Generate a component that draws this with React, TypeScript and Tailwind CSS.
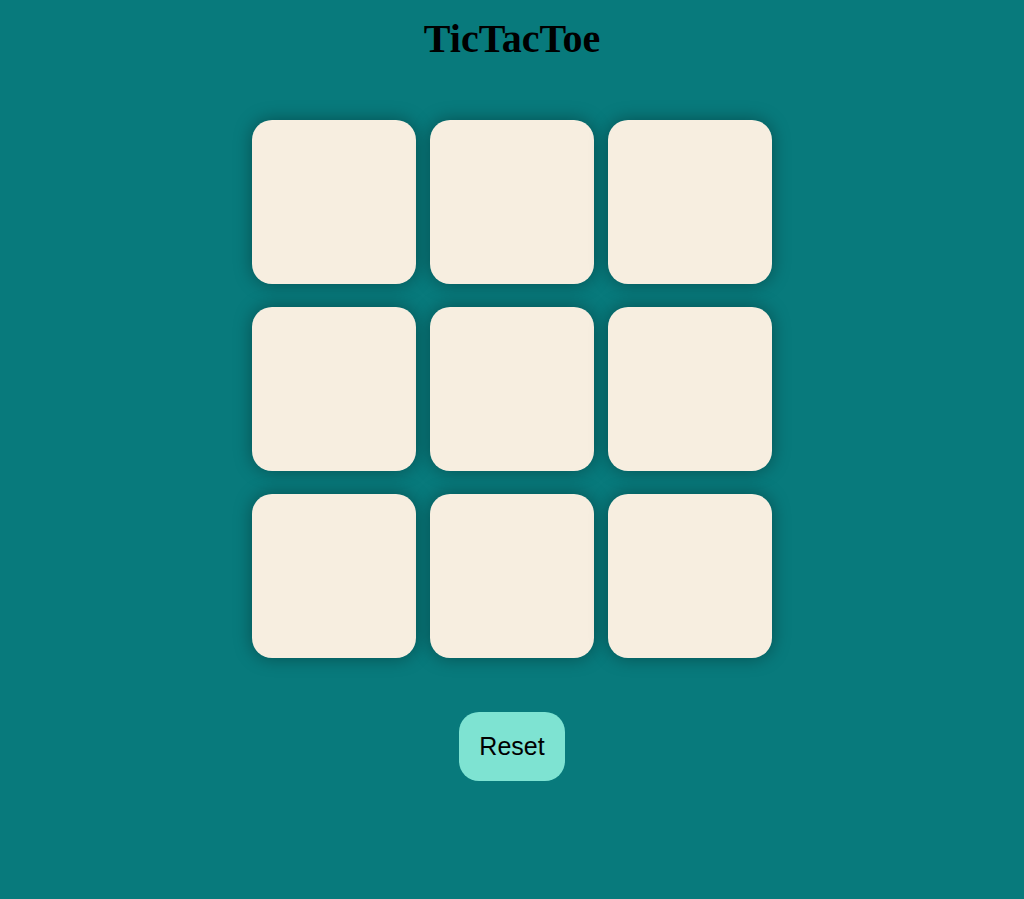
const cells = Array(9).fill(null);

const App = () => {
  return (
    <div className="min-h-screen w-full bg-[#087a7c] flex flex-col items-center pt-[16px]">
      <h1 className="text-[40px] leading-[46px] font-bold text-black font-['Liberation_Serif',serif]">
        TicTacToe
      </h1>
      <div className="mt-[58px] grid grid-cols-[repeat(3,164px)] gap-x-[14px] gap-y-[23px]">
        {cells.map((_, i) => (
          <div
            key={i}
            className="w-[164px] h-[164px] rounded-[20px] bg-[#f7eee0] shadow-[0_0_18px_rgba(0,0,0,0.35)]"
          />
        ))}
      </div>
      <button className="mt-[54px] w-[106px] h-[69px] rounded-[20px] bg-[#7ee3d2] flex items-center justify-center text-[25px] text-black font-['Liberation_Sans',Arial,sans-serif]">
        Reset
      </button>
    </div>
  );
};

export default App;
